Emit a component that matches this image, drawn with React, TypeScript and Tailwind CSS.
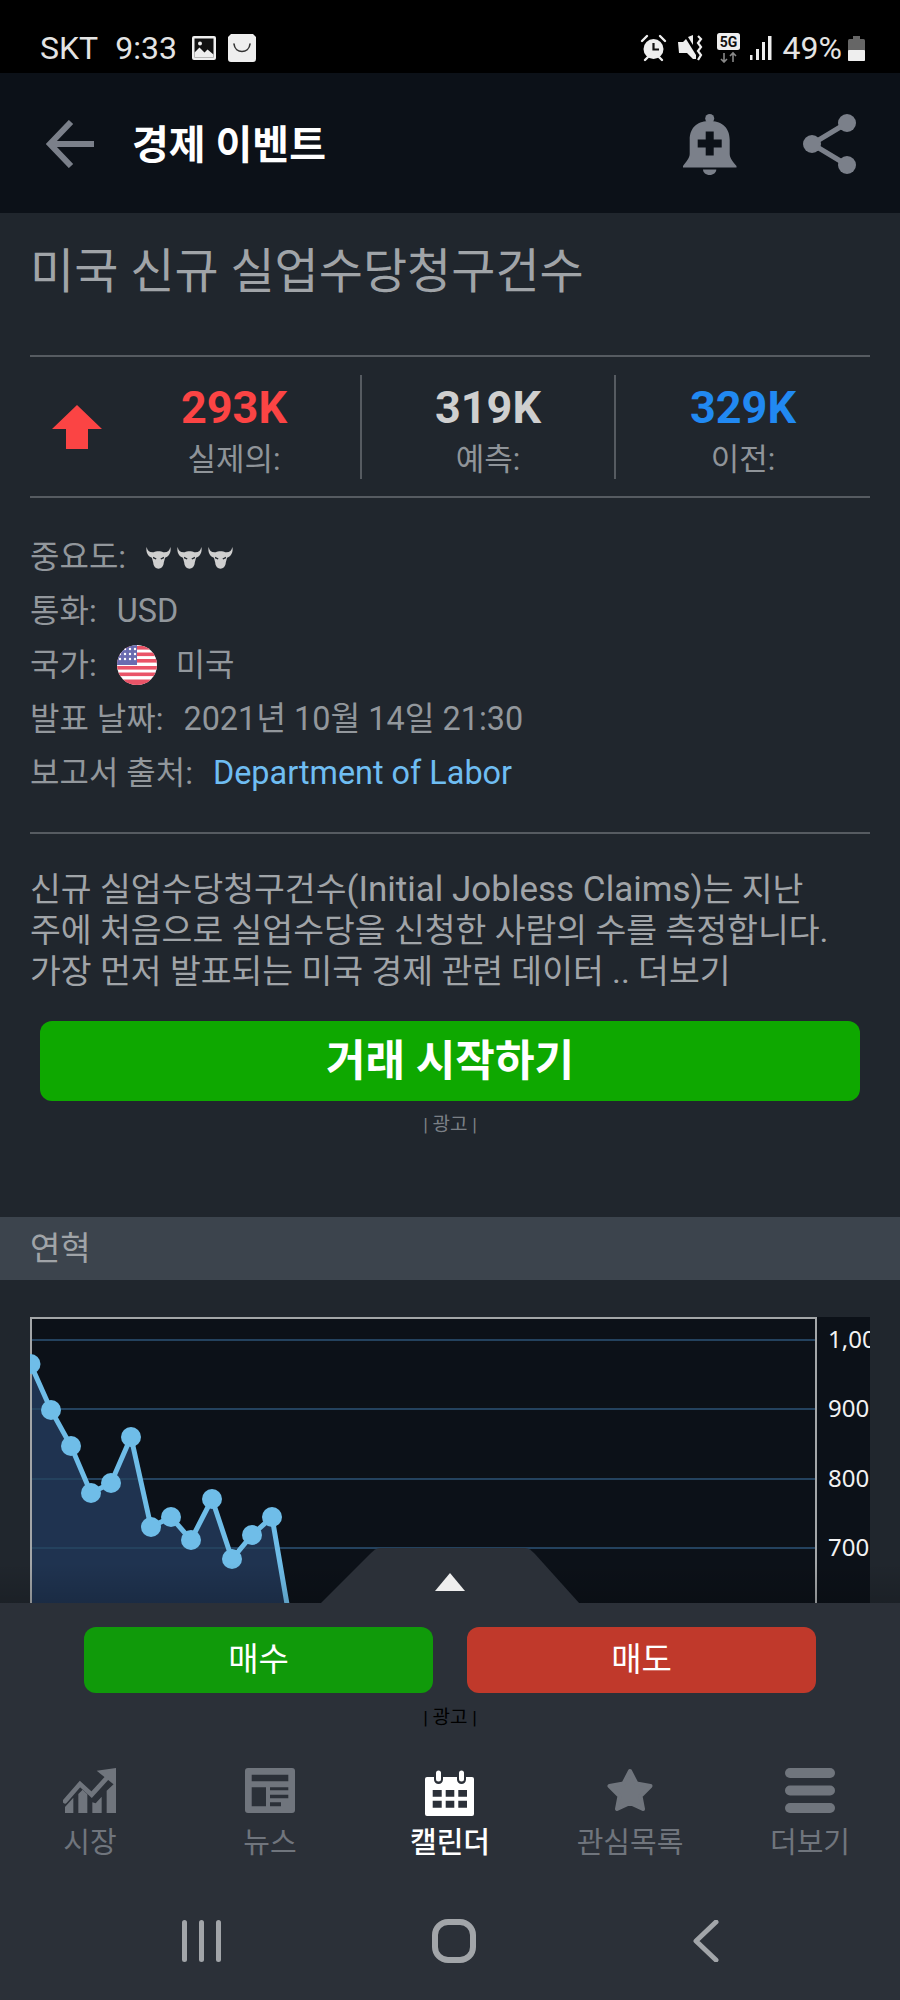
import React from "react";

const font = "font-['Roboto','Noto_Sans_CJK_KR',sans-serif]";

// chart points read off the screenshot, in chart coordinates
const points: [number, number][] = [
  [0.5, 47], [21, 93], [41, 129], [61, 176], [81, 166], [101, 120], [121, 210],
  [141, 200], [161, 223], [182, 182], [202, 242], [222, 218], [242, 200],
];

function Bull() {
  return (
    <svg width="25" height="23" viewBox="0 0 76 68" fill="#cfcfcf">
      <path d="M2 2C4 14 12 20 24 18C30 14 46 14 52 18C64 20 72 14 74 2C78 20 68 32 58 35L54 50C53 62 46 68 38 68C30 68 23 62 22 50L18 35C8 32-2 20 2 2Z" />
      <path d="M22 32l10 5-2 3-9-4zM54 32l-10 5 2 3 9-4z" fill="#20262d" />
    </svg>
  );
}

function UsFlag() {
  return (
    <svg width="40" height="40" viewBox="0 0 40 40">
      <defs>
        <clipPath id="flagClip">
          <circle cx="20" cy="20" r="20" />
        </clipPath>
      </defs>
      <g clipPath="url(#flagClip)">
        <rect width="40" height="40" fill="#ffffff" />
        {[0, 6.5, 13, 20, 26.5, 33.5].map((y) => (
          <rect key={y} y={y + 1} width="40" height="3.6" fill="#ea5468" />
        ))}
        <rect y="36" width="40" height="4" fill="#ea5468" />
        <rect width="20" height="20" fill="#6a6cb0" />
        {[4, 9, 14].flatMap((y) =>
          [3, 8, 13, 18].map((x) => <circle key={`${x}-${y}`} cx={x} cy={y} r="1.2" fill="#fff" />)
        )}
      </g>
    </svg>
  );
}

function StatusBar() {
  return (
    <div className="flex h-[73px] items-end justify-between bg-black pb-[7px] pl-[40px] pr-[35px] text-[32px] leading-[36px] text-[#e4e4e4]">
      <div className="flex items-center">
        <span>SKT</span>
        <span className="ml-[17px]">9:33</span>
        <svg className="ml-[15px]" width="24" height="24" viewBox="0 0 24 24">
          <rect width="24" height="24" rx="2" fill="#eee" />
          <rect x="2.5" y="2.5" width="19" height="19" fill="#111" />
          <path d="M2.5 21.5v-5l5-5 5 5 3-3 6 5v3z" fill="#eee" />
          <circle cx="8" cy="7.5" r="2" fill="#eee" />
        </svg>
        <svg className="ml-[11px] -mt-[2px]" width="30" height="30" viewBox="0 0 30 30">
          <path d="M4 2h22l3 3v22a3 3 0 0 1-3 3H4a3 3 0 0 1-3-3V5z" fill="#eee" />
          <path d="M7 12c1 10 15 10 16 0" fill="none" stroke="#333" strokeWidth="1.6" strokeLinecap="round" />
        </svg>
      </div>
      <div className="flex items-center">
        <svg width="27" height="28" viewBox="0 0 27 28" fill="none">
          <circle cx="13.5" cy="15" r="10" fill="#eee" />
          <path d="M13.5 9v6.5H19" stroke="#111" strokeWidth="2.2" />
          <path d="M2 7l5-5M25 7l-5-5M5 26l3-3M22 26l-3-3" stroke="#eee" strokeWidth="2.4" strokeLinecap="round" />
        </svg>
        <svg className="ml-[11px]" width="25" height="28" viewBox="0 0 25 28" fill="none">
          <path d="M0 8h5l3-3 10 16v4h-3l-6-6H1z" fill="#eee" />
          <path d="M10 3l5-2v10z" fill="#eee" />
          <path d="M20 2l3 3-3 4 3 4-3 4 3 4-3 5" stroke="#eee" strokeWidth="2.2" />
        </svg>
        <svg className="ml-[14px]" width="23" height="30" viewBox="0 0 23 30">
          <rect width="23" height="17" rx="2.5" fill="#eee" />
          <text x="11.5" y="14" textAnchor="middle" fontSize="14" fontWeight="700" fontFamily="Roboto" fill="#111">5G</text>
          <path d="M7 20v9M4 26l3 3 3-3M16 29v-9M13 23l3-3 3 3" stroke="#888" strokeWidth="1.6" fill="none" />
        </svg>
        <svg className="ml-[10px]" width="22" height="26" viewBox="0 0 22 26" fill="#eee">
          <rect x="0" y="20" width="2.5" height="5" />
          <rect x="6" y="14" width="3" height="11" />
          <rect x="12" y="7" width="3" height="18" />
          <rect x="18" y="1" width="3.5" height="24" />
        </svg>
        <span className="ml-[11px]">49%</span>
        <svg className="ml-[6px]" width="17" height="25" viewBox="0 0 17 25">
          <rect x="5" y="0" width="7" height="4" fill="#666" />
          <rect x="0" y="3" width="17" height="22" rx="1.5" fill="#666" />
          <rect x="0" y="14" width="17" height="11" rx="1" fill="#eee" />
        </svg>
      </div>
    </div>
  );
}

function Header() {
  return (
    <div className="flex h-[140px] items-center bg-[#0c1118] pl-[46px] pr-[43px] pt-[2px]">
      <svg width="48" height="48" viewBox="0 0 48 48" fill="none" stroke="#7b808a" strokeWidth="6">
        <path d="M48 24H6M25 2L4 24l21 22" />
      </svg>
      <h1 className="ml-[38px] mt-[4px] flex-1 text-[40px] font-bold leading-[48px] text-white">경제 이벤트</h1>
      <svg width="54" height="61" viewBox="0 0 54 61" fill="#7b808a">
        <circle cx="26.7" cy="4.5" r="4.5" />
        <path d="M6.7 40V26C6.700 12 16 7 26.700 7C37 7 46.700 12 46.700 26V40C46.700 44 50 48 53.500 52V53.500H0V52C3 48 6.700 44 6.700 40Z" />
        <path d="M20 55.500h13.300c0 3-3 5.500-6.700 5.500s-6.600-2.500-6.600-5.500z" />
        <path d="M22.700 17.500h8v8h8v8h-8v8h-8v-8h-8v-8h8z" fill="#0c1118" />
      </svg>
      <svg className="ml-[66px]" width="54" height="60" viewBox="0 0 54 60" fill="#7b808a">
        <path d="M44 9L9 30l35 21" fill="none" stroke="#7b808a" strokeWidth="5" />
        <circle cx="44" cy="9" r="9" />
        <circle cx="9" cy="30" r="9" />
        <circle cx="44" cy="51" r="9" />
      </svg>
    </div>
  );
}

function Stat({ value, label, color }: { value: string; label: string; color: string }) {
  return (
    <div className="flex flex-col items-center pt-[8px]">
      <div className={`text-[45px] font-bold leading-[52px] ${color}`}>{value}</div>
      <div className="mt-[6px] text-[31px] leading-[40px] text-[#8f9499]">{label}</div>
    </div>
  );
}

function InfoRow({ label, children }: { label: string; children: React.ReactNode }) {
  return (
    <div className="flex h-[54px] items-center text-[32px] text-[#92979c]">
      <span className="mr-[20px]">{label}</span>
      {children}
    </div>
  );
}

function Chart() {
  const line = points.map(([x, y]) => `${x},${y}`).join(" ");
  return (
    <div className="mx-[30px] mt-[37px] h-[287px] bg-[#0c1118]">
      <svg width="840" height="287" viewBox="0 0 840 287">
        <path d={`M2 47 ${line} L 257 287 L2 287 Z`} fill="#1f3350" />
        {[23, 92, 162, 231].map((y) => (
          <line key={y} x1="2" x2="786" y1={y} y2={y} stroke="#24425e" strokeWidth="2" />
        ))}
        <path d="M1 287V1H786V287" fill="none" stroke="#a3a6a8" strokeWidth="2" />
        <clipPath id="plotClip">
          <rect x="0" y="0" width="786" height="287" />
        </clipPath>
        <g clipPath="url(#plotClip)">
          <polyline points={`${line} 257,287`} fill="none" stroke="#6fbde8" strokeWidth="5" />
          {points.map(([x, y]) => (
            <circle key={x} cx={x} cy={y} r="10" fill="#6fbde8" />
          ))}
        </g>
        {[["1,000", 23], ["900", 92], ["800", 162], ["700", 231]].map(([t, y]) => (
          <text key={t} x="798" y={Number(y) + 8} fontSize="24" fontFamily="Noto Sans" fill="#f2f2f2">{t}</text>
        ))}
      </svg>
    </div>
  );
}

function NavItem({ label, active, children }: { label: string; active?: boolean; children: React.ReactNode }) {
  return (
    <div className="flex w-[180px] flex-col items-center">
      <div className="flex h-[48px] items-start">{children}</div>
      <div className={`mt-[7px] text-[29px] leading-[40px] ${active ? "font-medium text-white" : "text-[#70757d]"}`}>{label}</div>
    </div>
  );
}

function BottomPanel() {
  return (
    <div className="relative h-[397px] bg-[#2b3038]">
      <div className="absolute inset-x-0 top-[-40px] h-[40px] bg-gradient-to-t from-black/15 to-transparent" />
      {/* tab that pulls the trade panel up */}
      <svg className="absolute left-[320px] top-[-55px]" width="260" height="56" viewBox="0 0 260 56">
        <path d="M0 56L50 6c4-4 6-6 10-6h145c4 0 6 2 10 6l45 50z" fill="#2b3038" />
        <path d="M115 43l15-18 15 18z" fill="#eeeeee" />
      </svg>
      <div className="flex justify-center gap-[34px] pt-[24px]">
        <button className="h-[66px] w-[349px] rounded-[12px] bg-[#109a0a] text-[33px] text-white">매수</button>
        <button className="h-[66px] w-[349px] rounded-[12px] bg-[#c0392b] text-[33px] text-white">매도</button>
      </div>
      <div className="mt-[9px] text-center text-[19px] leading-[32px] text-black">| 광고 |</div>
      <div className="mt-[34px] flex">
        <NavItem label="시장">
          <svg width="54" height="45" viewBox="0 0 160 135" fill="#70757d">
            <path d="M5 100L50 48l35 32 50-55" fill="none" stroke="#70757d" strokeWidth="14" strokeLinecap="round" />
            <path d="M100 8l58-8v55z" />
            <path d="M5 135v-18l25-28v46zM45 135V78l13-13 14 14v56zM87 135v-32l10 3 18-20v49zM130 135V68l28-26v93z" />
          </svg>
        </NavItem>
        <NavItem label="뉴스">
          <svg width="50" height="45" viewBox="0 0 50 45">
            <rect width="50" height="45" rx="3" fill="#70757d" />
            <path d="M6.700 6.700h36.600v6.600H6.700zM6.700 19.300H21v19H6.700zM25 19.300h18.300v3H25zM25 26.700h18.300v3.600H25zM25 34.300h11v4H25z" fill="#2b3038" />
          </svg>
        </NavItem>
        <NavItem label="캘린더" active>
          <svg className="mt-[2px]" width="50" height="46" viewBox="0 0 50 46">
            <rect x="0" y="7" width="49" height="39" rx="2" fill="#fff" />
            <rect x="9" y="0" width="9" height="14" rx="4.500" fill="#2b3038" />
            <rect x="32" y="0" width="9" height="14" rx="4.500" fill="#2b3038" />
            <rect x="11" y="0.500" width="5" height="11" rx="2.500" fill="#fff" />
            <rect x="34" y="0.500" width="5" height="11" rx="2.500" fill="#fff" />
            <path d="M7.700 20h9v6.700h-9zM20.700 20h8.600v6.700h-8.600zM33.300 20H42v6.700h-8.700zM7.700 30.700h9v7h-9zM20.700 30.700h8.600v7h-8.600zM33.300 30.700H42v7h-8.700z" fill="#2b3038" />
          </svg>
        </NavItem>
        <NavItem label="관심목록">
          <svg width="46" height="44" viewBox="0 0 46 44" fill="#70757d" stroke="#70757d" strokeWidth="4" strokeLinejoin="round">
            <path d="M23 3l6.500 12.500 14 2.500-10 10 2.500 13-13-6-13 6 2.500-13-10-10 14-2.500z" />
          </svg>
        </NavItem>
        <NavItem label="더보기">
          <svg width="50" height="45" viewBox="0 0 50 45" fill="#70757d">
            <rect width="50" height="10" rx="5" />
            <rect y="17.500" width="50" height="10" rx="5" />
            <rect y="35" width="50" height="10" rx="5" />
          </svg>
        </NavItem>
      </div>
      {/* android nav keys */}
      <div className="mt-[56px] flex items-center">
        <div className="flex w-[404px] justify-center">
          <svg width="40" height="42" viewBox="0 0 40 42" fill="#a2a5a9">
            <rect x="0" width="5" height="42" rx="2.5" />
            <rect x="17" width="5" height="42" rx="2.5" />
            <rect x="34" width="5" height="42" rx="2.5" />
          </svg>
        </div>
        <svg width="44" height="44" viewBox="0 0 44 44" fill="none" className="ml-[28px]">
          <rect x="3" y="3" width="38" height="38" rx="13" stroke="#a2a5a9" strokeWidth="6" />
        </svg>
        <svg width="26" height="42" viewBox="0 0 26 42" fill="none" className="ml-[217px]">
          <path d="M23 2L3 21l20 19" stroke="#a2a5a9" strokeWidth="5" strokeLinecap="round" strokeLinejoin="round" />
        </svg>
      </div>
    </div>
  );
}

export default function App() {
  return (
    <div className={`flex h-[2000px] w-[900px] flex-col overflow-hidden bg-[#20262d] ${font}`}>
      <StatusBar />
      <Header />
      <div className="flex-1 overflow-hidden">
        <div className="px-[30px]">
          <h2 className="pt-[30px] text-[48px] font-normal leading-[58px] text-[#a0a4a8]">미국 신규 실업수당청구건수</h2>
          <div className="mt-[54px] flex h-[143px] items-center border-y-2 border-[#565b61]">
            <svg className="ml-[22px] mt-[1px] shrink-0" width="50" height="44" viewBox="0 0 50 44" fill="#fb4444">
              <path d="M25 0l25 24H36v20H14V24H0z" />
            </svg>
            <div className="ml-[6px] flex h-[104px] w-[254px] shrink-0 items-center justify-center border-r-2 border-[#565b61]">
              <Stat value="293K" label="실제의:" color="text-[#fb4444]" />
            </div>
            <div className="flex h-[104px] w-[254px] shrink-0 items-center justify-center border-r-2 border-[#565b61]">
              <Stat value="319K" label="예측:" color="text-[#cfcfcf]" />
            </div>
            <div className="flex h-[104px] flex-1 items-center justify-center">
              <Stat value="329K" label="이전:" color="text-[#2189f2]" />
            </div>
          </div>
          <div className="pt-[32px]">
            <InfoRow label="중요도:">
              <div className="flex gap-[6px]"><Bull /><Bull /><Bull /></div>
            </InfoRow>
            <InfoRow label="통화:"><span className="text-[32.4px]">USD</span></InfoRow>
            <InfoRow label="국가:">
              <UsFlag />
              <span className="ml-[19px]">미국</span>
            </InfoRow>
            <InfoRow label="발표 날짜:"><span className="text-[32.4px]">2021년 10월 14일 21:30</span></InfoRow>
            <InfoRow label="보고서 출처:"><span className="text-[32.4px] text-[#6fbdf2]">Department of Labor</span></InfoRow>
          </div>
          <div className="mt-[32px] border-t-2 border-[#565b61] pt-[35px] text-[33.5px] leading-[41px] text-[#a0a4a8]">
            신규 실업수당청구건수<span className="text-[35px]">(Initial Jobless Claims)</span>는 지난
            <br />
            주에 처음으로 실업수당을 신청한 사람의 수를 측정합니다.
            <br />
            가장 먼저 발표되는 미국 경제 관련 데이터 .. 더보기
          </div>
        </div>
        <button className="mx-[40px] mt-[29px] block h-[80px] w-[820px] rounded-[12px] bg-[#0ea800] text-[43px] font-bold text-white">거래 시작하기</button>
        <div className="mt-[11px] text-center text-[19px] leading-[26px] text-[#7b8086]">| 광고 |</div>
        <div className="mt-[79px] flex h-[63px] items-center bg-[#3c444d] px-[30px] text-[33px] text-[#a0a4a8]">연혁</div>
        <Chart />
      </div>
      <BottomPanel />
    </div>
  );
}
